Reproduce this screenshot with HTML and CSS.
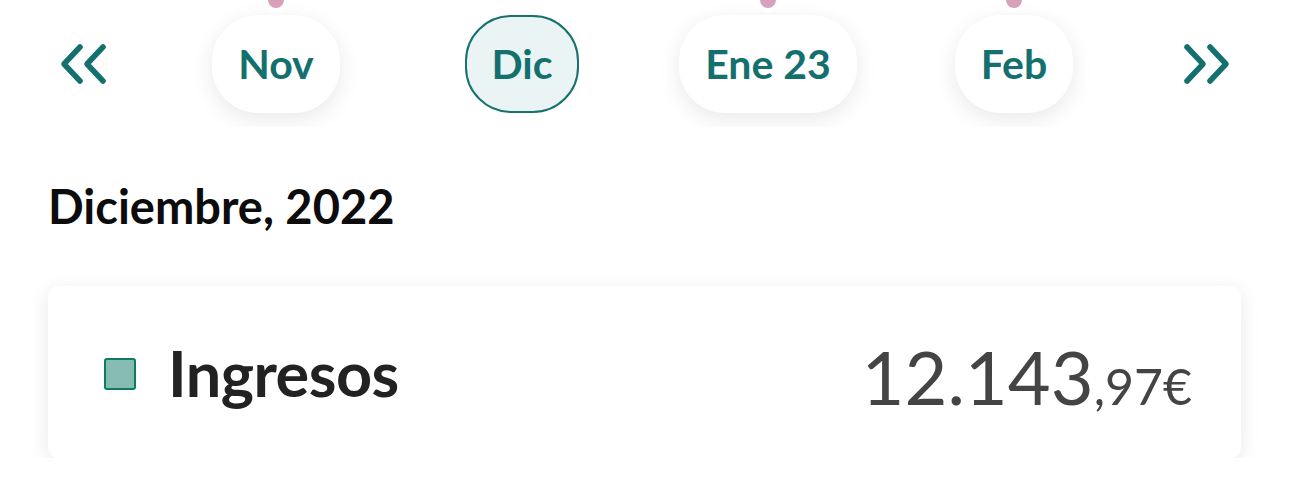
FILE: index.html
```html
<!DOCTYPE html>
<html lang="es">
<head>
    <meta charset="UTF-8">
    <meta name="viewport" content="width=device-width, initial-scale=1.0">
    <title>Resumen mensual</title>
    <link rel="stylesheet" href="styles.css">
</head>
<body>

<!-- Month selector -->
<div class="months">
    <button class="nav-btn nav-prev" aria-label="Anterior">
        <svg width="50" height="44" viewBox="0 0 50 44">
            <path d="M22 5 L6 22 L22 39 M45 5 L29 22 L45 39" fill="none" stroke="#146f6f" stroke-width="5.5" stroke-linecap="round" stroke-linejoin="round"/>
        </svg>
    </button>
    <div class="month-cell">
        <span class="month-pill"><span class="dot"></span>Nov</span>
    </div>
    <div class="month-cell">
        <span class="month-pill active">Dic</span>
    </div>
    <div class="month-cell">
        <span class="month-pill"><span class="dot"></span>Ene 23</span>
    </div>
    <div class="month-cell">
        <span class="month-pill"><span class="dot"></span>Feb</span>
    </div>
    <button class="nav-btn nav-next" aria-label="Siguiente">
        <svg width="50" height="44" viewBox="0 0 50 44">
            <path d="M5 5 L21 22 L5 39 M28 5 L44 22 L28 39" fill="none" stroke="#146f6f" stroke-width="5.5" stroke-linecap="round" stroke-linejoin="round"/>
        </svg>
    </button>
</div>

<h2 class="period">Diciembre, 2022</h2>

<div class="card">
    <span class="swatch"></span>
    <span class="label">Ingresos</span>
    <span class="amount">12.143<small>,97€</small></span>
</div>

</body>
</html>
```

FILE: styles.css
```css
body {
    margin: 0;
    font-family: Lato, "Open Sans", sans-serif;
    background: #fff;
    color: #111;
}
.months {
    display: flex;
    align-items: center;
    height: 127px;
    overflow: hidden;
}
.nav-btn {
    border: none;
    background: none;
    padding: 0;
    cursor: pointer;
    display: flex;
}
.nav-prev {
    margin-left: 58px;
    margin-right: 45px;
}
.nav-next {
    margin-left: 45px;
}
.month-cell {
    width: 246px;
    display: flex;
    justify-content: center;
}
.month-pill {
    position: relative;
    display: flex;
    align-items: center;
    justify-content: center;
    height: 98px;
    padding: 0 26px;
    border-radius: 46px;
    background: #fff;
    box-shadow: 0 6px 22px rgba(0, 0, 0, 0.09);
    color: #13706f;
    font-size: 41px;
    font-weight: 700;
    box-sizing: border-box;
}
.month-pill.active {
    background: #eaf4f5;
    border: 2px solid #17716f;
    box-shadow: none;
    padding: 0 24px;
}
.dot {
    position: absolute;
    top: -27px;
    left: 50%;
    margin-left: -12px;
    width: 16px;
    height: 16px;
    border-radius: 50%;
    background: #d6a1b9;
    border: 4px solid #fff;
}
.period {
    margin: 51px 0 0 48px;
    font-size: 47px;
    font-weight: 700;
    line-height: 56px;
    color: #0c0c0c;
}
.card {
    display: flex;
    align-items: center;
    margin: 52px 49px 0 48px;
    height: 172px;
    padding: 0 49px 0 56px;
    background: #fff;
    border-radius: 10px;
    box-shadow: 0 4px 20px rgba(0, 0, 0, 0.09);
}
.swatch {
    width: 28px;
    height: 28px;
    background: #86bcb2;
    border: 2px solid #0f7a66;
    border-radius: 3px;
    margin-top: 4px;
}
.label {
    margin-left: 32px;
    font-size: 63px;
    font-weight: 700;
    color: #222;
    letter-spacing: -0.5px;
}
.amount {
    margin-left: auto;
    margin-top: 8px;
    font-size: 74px;
    font-weight: 400;
    color: #444;
}
.amount small {
    font-size: 50px;
}
```
